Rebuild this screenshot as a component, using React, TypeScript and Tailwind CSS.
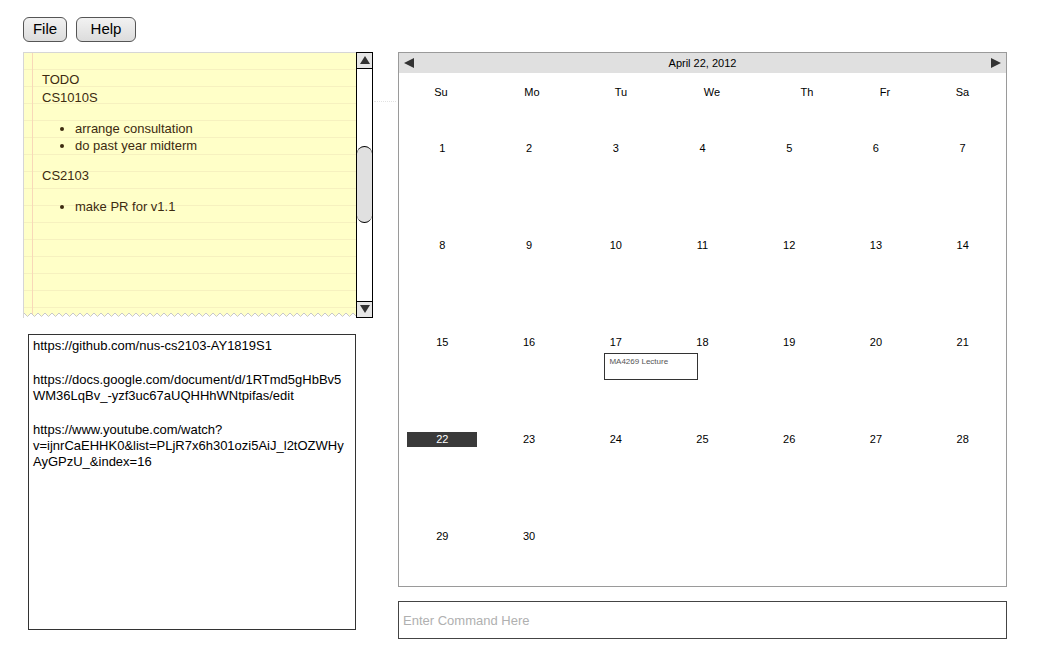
import React from "react";

const weekdays = ["Su", "Mo", "Tu", "We", "Th", "Fr", "Sa"];

const weeks: (number | null)[][] = [
  [1, 2, 3, 4, 5, 6, 7],
  [8, 9, 10, 11, 12, 13, 14],
  [15, 16, 17, 18, 19, 20, 21],
  [22, 23, 24, 25, 26, 27, 28],
  [29, 30, null, null, null, null, null],
];

function Triangle({ dir }: { dir: "left" | "right" | "up" | "down" }) {
  const pts = {
    left: "10,0 10,10 0,5",
    right: "0,0 0,10 10,5",
    up: "0,8 10,8 5,0",
    down: "0,0 10,0 5,8",
  }[dir];
  return (
    <svg width="10" height="10" viewBox="0 0 10 10" className="block">
      <polygon points={pts} fill="#333" />
    </svg>
  );
}

function Note() {
  return (
    <div className="flex w-[350px] h-[266px]">
      {/* papier kuning */}
      <div className="relative flex-1 border-t border-l border-[#d6d6d6] bg-[#ffffc8] bg-[repeating-linear-gradient(to_bottom,transparent_0px,transparent_16px,#f6f1bf_16px,#f6f1bf_17px)] overflow-hidden">
        <div className="absolute left-[8px] top-0 bottom-0 w-px bg-[#f8d8b8]" />
        <div className="pl-[18px] pt-[18px] text-[13px] leading-[18px] text-[#3d2b10]">
          <div>TODO</div>
          <div>CS1010S</div>
          <ul className="list-disc pl-[33px] my-[13px] leading-[17px]">
            <li>arrange consultation</li>
            <li>do past year midterm</li>
          </ul>
          <div>CS2103</div>
          <ul className="list-disc pl-[33px] my-[13px] leading-[17px]">
            <li>make PR for v1.1</li>
          </ul>
        </div>
        {/* zigzag bawah */}
        <svg className="absolute left-0 bottom-0" width="340" height="8" viewBox="0 0 340 8">
          <defs>
            <pattern id="zz" width="7" height="8" patternUnits="userSpaceOnUse">
              <polygon points="0,8 0,3 3.5,6.5 7,3 7,8" fill="#fff" />
              <polyline points="0,3 3.5,6.5 7,3" fill="none" stroke="#c8c8c8" strokeWidth="1" />
            </pattern>
          </defs>
          <rect width="340" height="8" fill="url(#zz)" />
        </svg>
      </div>
      {/* scrollbar */}
      <div className="w-[17px] border border-black bg-white flex flex-col">
        <div className="h-[16px] border-b border-black bg-[#e6e6e6] flex items-center justify-center">
          <Triangle dir="up" />
        </div>
        <div className="flex-1 pt-[77px]">
          <div className="h-[77px] rounded-full border-y border-black bg-[#e0e0e0]" />
        </div>
        <div className="h-[16px] border-t border-black bg-[#e6e6e6] flex items-center justify-center">
          <Triangle dir="down" />
        </div>
      </div>
    </div>
  );
}

function Links() {
  return (
    <div className="ml-[5px] mt-[16px] w-[328px] h-[296px] border border-[#333] pl-[4px] pr-[8px] pt-[3px] text-[13px] leading-[16px] text-black break-all">
      <p>https://github.com/nus-cs2103-AY1819S1</p>
      <p className="mt-[18px]">https://docs.google.com/document/d/1RTmd5gHbBv5WM36LqBv_-yzf3uc67aUQHHhWNtpifas/edit</p>
      <p className="mt-[18px]">
        https://www.youtube.com/watch?
        <br />
        v=ijnrCaEHHK0&amp;list=PLjR7x6h301ozi5AiJ_l2tOZWHyAyGPzU_&amp;index=16
      </p>
    </div>
  );
}

function Calendar() {
  return (
    <div className="w-[609px] h-[535px] border border-[#9a9a9a] bg-white flex flex-col text-[11px] text-black">
      <div className="h-[20px] bg-[#e0e0e0] flex items-center justify-between px-[5px] leading-[12px]">
        <Triangle dir="left" />
        <span className="-mt-px">April 22, 2012</span>
        <Triangle dir="right" />
      </div>
      <div className="grid grid-cols-[84px_98px_80px_102px_88px_68px_87px] h-[28px] pt-[13px] leading-[13px]">
        {weekdays.map((d) => (
          <div key={d} className="text-center">
            {d}
          </div>
        ))}
      </div>
      <div className="grid grid-cols-7">
        {weeks.flat().map((n, i) => (
          <div key={i} className="h-[97px] pt-[40px]">
            {n !== null && (
              <div
                className={`w-[70px] h-[15px] mx-auto flex items-center justify-center ${
                  n === 22 ? "bg-[#3a3a3a] text-white" : ""
                }`}
              >
                {n}
              </div>
            )}
            {n === 17 && (
              <div className="ml-[32px] mt-[3px] w-[94px] h-[27px] border border-[#333] bg-white px-[4px] pt-[3px] text-[8px] leading-[10px] text-[#555] whitespace-nowrap">
                MA4269 Lecture
              </div>
            )}
          </div>
        ))}
      </div>
    </div>
  );
}

export default function App() {
  return (
    <div className="relative w-[1042px] h-[652px] bg-white font-['Liberation_Sans',Arial,sans-serif]">
      {/* Menu */}
      <div className="flex gap-[9px] pl-[23px] pt-[17px]">
        <button className="w-[44px] h-[25px] rounded-[6px] border border-[#555] bg-[linear-gradient(#f2f2f2,#dcdcdc)] text-[15px] leading-none text-black pb-[2px]">
          File
        </button>
        <button className="w-[60px] h-[25px] rounded-[6px] border border-[#555] bg-[linear-gradient(#f2f2f2,#dcdcdc)] text-[15px] leading-none text-black pb-[2px]">
          Help
        </button>
      </div>

      <div className="flex pl-[23px] mt-[10px]">
        <div className="flex flex-col">
          <Note />
          <Links />
        </div>
        <div className="ml-[25px] flex flex-col">
          <Calendar />
          <input
            placeholder="Enter Command Here"
            className="mt-[14px] w-[609px] h-[38px] border border-[#444] px-[4px] text-[13px] text-black placeholder-[#b0b0b0] outline-none"
          />
        </div>
      </div>

      {/* garis titik kecil di samping scrollbar */}
      <div className="absolute left-[374px] top-[101px] w-[22px] border-t border-dotted border-[#e2e2e2]" />
    </div>
  );
}
